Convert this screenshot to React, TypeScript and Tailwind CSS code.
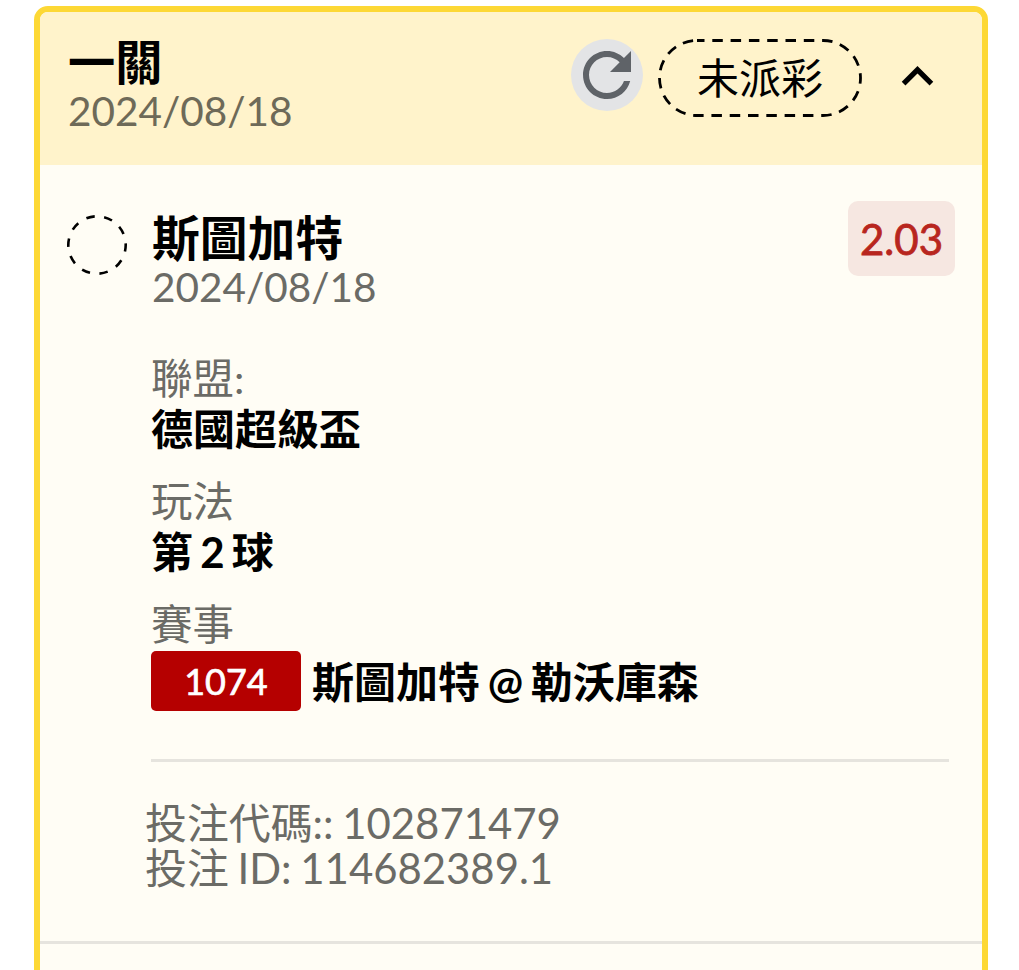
const FONT = "font-['Lato','Noto_Sans_CJK_TC',sans-serif]"

function RefreshIcon() {
  return (
    <svg viewBox="0 0 24 24" className="h-[72px] w-[72px] fill-[#5f6368]">
      <path d="M17.65 6.35C16.2 4.9 14.21 4 12 4c-4.42 0-7.99 3.58-7.99 8s3.57 8 7.99 8c3.73 0 6.84-2.55 7.73-6h-2.08c-.82 2.33-3.04 4-5.65 4-3.31 0-6-2.69-6-6s2.69-6 6-6c1.66 0 3.14.69 4.22 1.78L13 11h7V4l-2.35 2.35z" />
    </svg>
  )
}

function ChevronUp() {
  return (
    <svg viewBox="0 0 24 24" className="h-[63px] w-[63px] fill-black">
      <path d="M12 8l-6 6 1.41 1.41L12 10.83l4.59 4.58L18 14z" />
    </svg>
  )
}

function DashedCircle() {
  return (
    <svg viewBox="0 0 60 60" className="mt-[14px] h-[60px] w-[60px] shrink-0">
      <circle
        cx="30"
        cy="30"
        r="28.7"
        fill="none"
        stroke="black"
        strokeWidth="2.6"
        strokeDasharray="8.5 9.53"
        strokeDashoffset="2"
      />
    </svg>
  )
}

function StatusPill({ label }: { label: string }) {
  return (
    <div className="relative ml-[15px] flex h-[78px] w-[204px] items-center justify-center text-[42px] text-black">
      <svg viewBox="0 0 204 78" className="absolute inset-0 h-full w-full">
        <rect
          x="1.5"
          y="1.5"
          width="201"
          height="75"
          rx="37.5"
          fill="none"
          stroke="black"
          strokeWidth="2.8"
          strokeDasharray="10.5 7.8"
          strokeDashoffset="3"
        />
      </svg>
      {label}
    </div>
  )
}

function Field({ label, value }: { label: string; value: string }) {
  return (
    <div className="mb-[21px] flex flex-col">
      <span className="text-[41.5px] leading-[50px] text-[#6b6b66]">{label}</span>
      <span className="text-[42px] leading-[52px] font-bold text-black [word-spacing:-3px]">{value}</span>
    </div>
  )
}

export default function App() {
  return (
    <div className={`${FONT} h-[970px] overflow-hidden bg-white pt-[6px] pl-[34px]`}>
      <div className="h-[1000px] w-[954px] overflow-hidden rounded-[14px] border-[6px] border-[#fdd835] bg-[#fffdf5]">
        <div className="flex h-[153px] items-start justify-between bg-[#fff3cb] pl-[28px]">
          <div className="flex flex-col pt-[24px]">
            <span className="text-[47.25px] leading-[52px] font-bold text-black">一關</span>
            <span className="text-[40.5px] leading-[46px] text-[#6e6a58]">2024/08/18</span>
          </div>
          <div className="flex items-start pt-[27px] pr-[33px]">
            <div className="flex h-[72px] w-[72px] items-center justify-center rounded-full bg-[#e3e4e6]">
              <RefreshIcon />
            </div>
            <StatusPill label="未派彩" />
            <div className="mt-[6px] ml-[24px]">
              <ChevronUp />
            </div>
          </div>
        </div>

        <div className="flex flex-col">
          <div className="flex items-start pt-[36px] pr-[27px] pl-[27px]">
            <DashedCircle />
            <div className="mt-[11px] ml-[25px] flex flex-1 flex-col">
              <span className="text-[47.8px] leading-[52px] font-bold text-black">斯圖加特</span>
              <span className="text-[40.5px] leading-[46px] text-[#6b6b66]">2024/08/18</span>
            </div>
            <div className="flex h-[75px] w-[107px] items-center justify-center rounded-[10px] bg-[#f6e7e1] pt-[2px] text-[42px] text-[#b8261e] [-webkit-text-stroke:0.8px_#b8261e]">
              2.03
            </div>
          </div>

          <div className="mt-[43px] flex flex-col pl-[111px]">
            <Field label="聯盟:" value="德國超級盃" />
            <Field label="玩法" value="第 2 球" />
            <span className="text-[41.5px] leading-[50px] text-[#6b6b66]">賽事</span>
            <div className="mt-[2px] flex items-center">
              <div className="flex h-[60px] w-[150px] items-center justify-center rounded-[5px] bg-[#b50000] text-[36px] text-white [-webkit-text-stroke:0.7px_white]">
                1074
              </div>
              <span className="ml-[11px] pt-[2px] text-[42px] leading-[58px] font-bold text-black [word-spacing:-2.5px]">
                斯圖加特 @ 勒沃庫森
              </span>
            </div>
          </div>

          <div className="mt-[48px] mr-[33px] ml-[111px] h-[3px] bg-[#e6e4de]" />

          <div className="mt-[39px] flex flex-col pl-[105px] text-[41.9px] leading-[45px] text-[#6b6b66] [word-spacing:-2px]">
            <span>投注代碼:: 102871479</span>
            <span>投注 ID: 114682389.1</span>
          </div>

          <div className="mt-[50px] h-[3px] bg-[#e6e4de]" />
        </div>
      </div>
    </div>
  )
}
